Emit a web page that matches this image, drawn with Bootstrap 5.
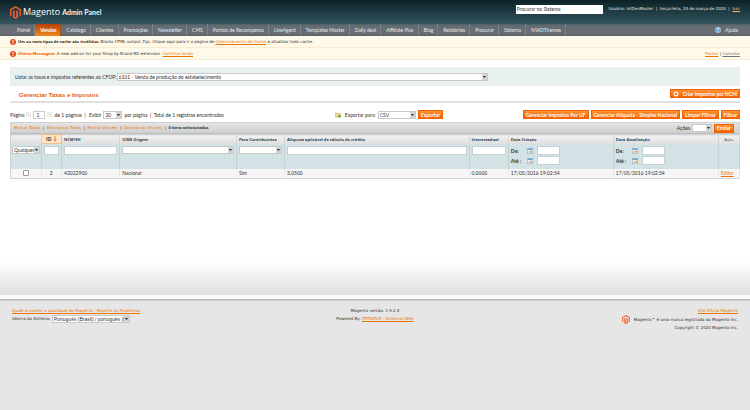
<!DOCTYPE html>
<html lang="pt-BR">
<head>
<meta charset="utf-8">
<meta name="viewport" content="width=device-width, initial-scale=1">
<title>Gerenciar Taxas e Impostos / Magento Admin</title>
<link href="https://cdn.jsdelivr.net/npm/bootstrap@5.3.0/dist/css/bootstrap.min.css" rel="stylesheet">
<style>
body{font-family:Lato,"Liberation Sans",sans-serif;font-size:5px;line-height:8px;color:#2f2f2f;background:#e6e6e6}
a{color:#ea7601}
input,select,button{font-family:inherit;font-size:5px;line-height:6px;color:#2f2f2f;border-radius:0}
.fine,.wide b{font-family:"Open Sans",sans-serif;font-size:4px}
.wide{font-family:"DejaVu Sans",sans-serif;font-size:4px}
.top-bar{height:24px;padding:0 10px;background:linear-gradient(#0b2227,#34545f)}
.logo-mark{width:11px;height:13px}
.logo-name{font-family:"Open Sans",sans-serif;font-size:9px;line-height:12px;color:#fff;margin:0 2px}
.logo-panel{font-weight:700;font-size:7px;line-height:12px;color:#eef3f4}
.top-search{width:87px;height:9px;padding:0 1px;border:0;background:#fff}
.top-user{color:#e4eaec;padding-bottom:6px}
.top-user span{margin-left:6px}
.top-user a{color:#f3b26b}
.menu-bar{height:12px;background:linear-gradient(#4d6069,#656c72 2px,#686e74 10px,#575d63);padding:0 12px 0 12px}
.menu-bar ul{height:12px}
.menu-bar li{border-right:1px solid #7b8288}
.menu-bar li a{display:block;padding:0 4px 0 5px;line-height:12px;color:#e6e9ea;text-decoration:none;white-space:nowrap}
.menu-bar li.current{border-color:#a34c0f}
.menu-bar li.current a{background:linear-gradient(#b9410b,#ee8a1c);color:#fff;font-weight:700}
.menu-help{color:#e6e9ea;text-decoration:none}
.ico{width:6px;height:6px;flex:none}
.notice{background:#fff9e9;border-bottom:1px solid #f7ecd2;padding:0 10px;height:12px}
.notice .ico{margin-right:2px}
.notice .hot{color:#ea5a00}
.content{padding:7px 10px 116px;background:linear-gradient(#fff calc(100% - 34px),#dedede)}
.cfop{background:#e7efef;height:19px;padding:0 5px}
.sel{appearance:none;height:8px;border:1px solid #c9c9c9;padding:0 5px 0 1px;background:#fff url("data:image/svg+xml,%3Csvg xmlns='http://www.w3.org/2000/svg' width='5' height='6'%3E%3Crect width='5' height='6' fill='%23d4d4d4'/%3E%3Cpath d='M1 2h3L2.500 4z' fill='%23222'/%3E%3C/svg%3E") right center no-repeat}
.sel-cfop{width:371px}
.sel-page{width:19px}
.sel-export{width:38px;margin:0 2px}
.sel-action{width:20px}
.sel-locale{width:78px;margin-left:1px;font-family:"Liberation Sans",sans-serif}
.title-row{height:17px;border-bottom:2px solid #dfdfdf}
.title-row h1{font-family:"Liberation Sans",sans-serif;font-size:6px;line-height:8px;font-weight:700;color:#eb5e00;margin:3px 0 0 9px}
.act{background:linear-gradient(#ff9233,#f76300);border:1px solid #ed6502;color:#fff;font-weight:700;height:9px;padding:0 2px;white-space:nowrap}
.pager{height:19px;padding-top:4px}
.pager-left{gap:2px;width:44.5%}
.pager-right{gap:2px}
.page-no{width:12px;height:8px;border:1px solid #c9c9c9;padding:0 2px}
.arrow{width:5px;height:5px;flex:none}
.mass{height:12px;border:1px solid #d1d1d1;border-bottom-color:#bdbdbd;background:linear-gradient(#e4e4e4,#cfcfcf);padding:0 5px 0 3px}
.mass a{text-decoration:none}
.grid{width:100%;table-layout:fixed;border-collapse:collapse;border:1px solid #cbd3d4}
.grid th{height:9px;line-height:7px;padding:0 2px;font-weight:700;color:#2d444f;background:linear-gradient(#f1f1f1,#dedede);border-right:1px solid #d6d6d6;white-space:nowrap}
.grid th.sorted{background:#fde3c8;border:1px solid #f5bd8a;font-size:5px;text-align:center}
.sort-arrow{width:4px;height:6px}
.grid .filter td{background:repeating-linear-gradient(90deg,#d0e0e3 0 2px,#d5e4e6 2px 4px);height:25px;vertical-align:top;padding:2px;border-right:1px solid #c2d2d5}
.grid .filter .sel,.grid .filter input{width:100%;display:block}
.grid .filter td:first-child{padding:2px 1px}
.txt{height:9px;border:1px solid #c6d1d3;background:#fff;padding:0 1px}
.grid .filter .dates{width:23px}
.date-row{height:10px}
.date-label{width:12px;font-weight:700}
.grid .record td{height:10px;line-height:8px;padding:0 2px;background:#f6f6f6;border-right:1px solid #e9e9e9}
.tick{appearance:none;width:6px;height:6px;border:1px solid #999;border-radius:1px;background:#fff;display:block;margin:0 auto}
.foot{border-top:1px solid #b8b8b8;box-shadow:inset 0 1px #cecece;padding:7px 12px;background:#e6e6e6}
.foot-gap{height:4px;background:#fbfbfb}
.foot-mark{width:8px;height:9px}
</style>
<script src="https://cdn.jsdelivr.net/npm/bootstrap@5.3.0/dist/js/bootstrap.bundle.min.js" defer></script>
</head>
<body>
<svg class="d-none" aria-hidden="true">
<symbol id="magento" viewBox="0 0 22 26"><path fill="#f05a28" d="M11 0 22 6.500V19.500L19 21.200V8.200L11 3.500 3 8.200V21.200L0 19.500V6.500z"/><path fill="#f05a28" d="M6 10l3.500-2V21.500l1.500 1 1.500-1V8L16 10v13l-5 3-5-3z"/></symbol>
<symbol id="alert" viewBox="0 0 12 12"><circle cx="6" cy="6" r="6" fill="#df4b26"/><path d="M5 2h2v5H5zM5 8h2v2H5z" fill="#fff"/></symbol>
<symbol id="cal" viewBox="0 0 12 12"><rect x=".5" y=".5" width="11" height="11" fill="#eef5fa" stroke="#7aa5c8"/><path d="M1 1h10v3H1z" fill="#6fa3d0"/><path d="M3 9l2-3 2 1 3-2v4z" fill="#e59a45"/></symbol>
</svg>
<header>
<div class="top-bar d-flex align-items-center">
<a href="#" class="d-flex align-items-center text-decoration-none"><svg class="logo-mark"><use href="#magento"/></svg><span class="logo-name">Magento</span><span class="logo-panel">Admin Panel</span></a>
<div class="top-user ms-auto d-flex align-items-center">
<input class="top-search" type="text" aria-label="Busca" value="Procurar no Sistema"><span class="wide text-nowrap">Usuário: intDevMaster &nbsp;|&nbsp; terça-feira, 24 de março de 2020 &nbsp;|&nbsp; <a href="#">Sair</a></span>
</div>
</div>
<nav class="menu-bar d-flex align-items-center justify-content-between">
<ul class="list-unstyled d-flex m-0">
<li><a href="#">Painel</a></li><li class="current"><a href="#">Vendas</a></li><li><a href="#">Catálogo</a></li><li><a href="#">Clientes</a></li><li><a href="#">Promoções</a></li><li><a href="#">Newsletter</a></li><li><a href="#">CMS</a></li><li><a href="#">Pontos de Recompensa</a></li><li><a href="#">LiveAgent</a></li><li><a href="#">Templates Master</a></li><li><a href="#">Daily deal</a></li><li><a href="#">Affiliate Plus</a></li><li><a href="#">Blog</a></li><li><a href="#">Relatórios</a></li><li><a href="#">Procurar</a></li><li><a href="#">Sistema</a></li><li><a href="#">NWDThemes</a></li>
</ul>
<a href="#" class="menu-help d-flex align-items-center"><svg class="ico me-1" viewBox="0 0 12 12"><circle cx="6" cy="6" r="5.500" fill="#5e9fd8" stroke="#d7e8f6"/><path d="M4 4.500q0-2 2-2t2 2q0 1-2 2v1M6 8.500v1.500" fill="none" stroke="#fff" stroke-width="1.500"/></svg>Ajuda</a>
</nav>
</header>
<div class="notice wide d-flex align-items-center"><svg class="ico"><use href="#alert"/></svg><span><b>Um ou mais tipos de cache são inválidos:</b> Blocks HTML output, Fpc. Clique aqui para ir a página de <a href="#">Gerenciamento de Cache</a> e atualizar todo cache.</span></div>
<div class="notice wide d-flex align-items-center"><svg class="ico"><use href="#alert"/></svg><span><b class="hot">Última Mensagem:</b> A new add-on for your Shop by Brand M2 extension &nbsp;<a href="#">Continue lendo</a></span><span class="ms-auto"><a href="#">Fechar</a> | <a href="#" class="text-secondary">Cancelar</a></span></div>
<main class="content">
<div class="cfop d-flex align-items-center"><label for="cfop">Listar as taxas e impostos referentes ao CFOP:</label><select id="cfop" class="sel sel-cfop"><option>6101 - Venda de produção do estabelecimento</option></select></div>
<div class="title-row d-flex align-items-center justify-content-between"><h1>Gerenciar Taxas e Impostos</h1><button class="act d-flex align-items-center gap-1" type="button"><svg class="ico" viewBox="0 0 12 12"><circle cx="6" cy="6" r="5" fill="#fff"/><path d="M6 3v6M3 6h6" stroke="#f76300" stroke-width="2"/></svg>Criar Impostos por NCM</button></div>
<div class="pager d-flex align-items-center">
<div class="pager-left d-flex align-items-center text-nowrap"><label for="pg">Página</label><svg class="arrow" viewBox="0 0 10 10"><rect x=".5" y=".5" width="9" height="9" fill="#fafafa" stroke="#ddd"/><path d="M6 3v4L3 5z" fill="#bbb"/></svg><input id="pg" class="page-no" type="text" value="1"><svg class="arrow" viewBox="0 0 10 10"><rect x=".5" y=".5" width="9" height="9" fill="#fafafa" stroke="#ddd"/><path d="M4 3v4l3-2z" fill="#bbb"/></svg><span>de 1 páginas &nbsp;|&nbsp;</span><label for="lim">Exibir</label><select id="lim" class="sel sel-page"><option>20</option></select><span>por página &nbsp;|&nbsp; Total de 1 registros encontrados</span></div>
<div class="d-flex align-items-center"><svg class="ico" viewBox="0 0 12 12"><path d="M0 2h4l1 1h6v7H0z" fill="#f0d890" stroke="#c9aa5a"/><path d="M6 7h3V5l3 3.500L9 12v-2H6z" fill="#5aa02c"/></svg><label for="exp" class="ms-1">Exportar para:</label><select id="exp" class="sel sel-export"><option>CSV</option></select><button class="act" type="button">Exportar</button></div>
<div class="pager-right d-flex ms-auto"><button class="act" type="button">Gerenciar Impostos Por UF</button><button class="act" type="button">Gerenciar Alíquota - Simples Nacional</button><button class="act" type="button">Limpar Filtros</button><button class="act" type="button">Filtrar</button></div>
</div>
<div class="mass d-flex align-items-center justify-content-between">
<div class="wide"><a href="#">Marcar Todos</a> &nbsp;|&nbsp; <a href="#">Desmarcar Todos</a> &nbsp;|&nbsp; <a href="#">Marcar Visíveis</a> &nbsp;|&nbsp; <a href="#">Desmarcar Visíveis</a> &nbsp;|&nbsp; <b>0 itens selecionados</b></div>
<div class="pager-right d-flex align-items-center"><label for="ac">Ações</label><select id="ac" class="sel sel-action"><option></option></select><button class="act" type="button">Enviar</button></div>
</div>
<table class="grid">
<colgroup><col style="width:4.200%"><col style="width:2.800%"><col style="width:8%"><col style="width:16%"><col style="width:6.600%"><col style="width:25.300%"><col style="width:5.400%"><col style="width:14.400%"><col style="width:14.400%"><col style="width:2.900%"></colgroup>
<thead class="fine"><tr><th></th><th class="sorted">ID <svg class="sort-arrow" viewBox="0 0 4 6"><path d="M2 0v5M.5 3.500 2 5l1.500-1.500" fill="none" stroke="#f07a1a"/></svg></th><th>NCM/SH</th><th>ICMS Origem</th><th>Para Contribuintes</th><th>Alíquota aplicável de cálculo do crédito</th><th>Interestadual</th><th>Data Criação</th><th>Data Atualização</th><th class="fw-normal text-center">Ação</th></tr></thead>
<tbody>
<tr class="filter"><td><select class="sel" aria-label="Seleção"><option>Qualquer</option></select></td><td><input class="txt" type="text" aria-label="ID"></td><td><input class="txt" type="text" aria-label="NCM/SH"></td><td><select class="sel" aria-label="ICMS Origem"><option></option></select></td><td><select class="sel" aria-label="Para Contribuintes"><option></option></select></td><td><input class="txt" type="text" aria-label="Alíquota"></td><td><input class="txt" type="text" aria-label="Interestadual"></td>
<td><div class="date-row d-flex align-items-center"><label for="c1" class="date-label">De:</label><svg class="ico mx-1"><use href="#cal"/></svg><input id="c1" class="txt dates" type="text"></div><div class="date-row d-flex align-items-center"><label for="c2" class="date-label">Até :</label><svg class="ico mx-1"><use href="#cal"/></svg><input id="c2" class="txt dates" type="text"></div></td>
<td><div class="date-row d-flex align-items-center"><label for="u1" class="date-label">De:</label><svg class="ico mx-1"><use href="#cal"/></svg><input id="u1" class="txt dates" type="text"></div><div class="date-row d-flex align-items-center"><label for="u2" class="date-label">Até :</label><svg class="ico mx-1"><use href="#cal"/></svg><input id="u2" class="txt dates" type="text"></div></td><td></td></tr>
<tr class="record"><td><input class="tick" type="checkbox" aria-label="Selecionar 2"></td><td class="text-center">2</td><td>42022900</td><td>Nacional</td><td>Sim</td><td>3.0500</td><td>0.0000</td><td>17/05/2016 19:02:54</td><td>17/05/2016 19:02:54</td><td><a href="#">Editar</a></td></tr>
</tbody>
</table>
</main>
<div class="foot-gap"></div>
<footer class="foot wide">
<div class="row g-0">
<div class="col-4"><div><a href="#">Ajude a manter a qualidade do Magento - Reporte os Problemas</a></div><div class="d-flex align-items-center"><label for="loc">Idioma do Sistema:</label><select id="loc" class="sel sel-locale"><option>Português (Brasil) / português (Brasil)</option></select></div></div>
<div class="col-4 text-center"><div>Magento versão. 1.9.2.4</div><div>Powered By: <a href="#">ITERATOR - Sistemas Web</a></div></div>
<div class="col-4 text-end"><div><a href="#">Site Oficial Magento</a></div><div class="d-flex align-items-center justify-content-end"><svg class="foot-mark me-1"><use href="#magento"/></svg>Magento™ é uma marca registrada da Magento Inc.</div><div>Copyright © 2020 Magento Inc.</div></div>
</div>
</footer>
</body>
</html>
